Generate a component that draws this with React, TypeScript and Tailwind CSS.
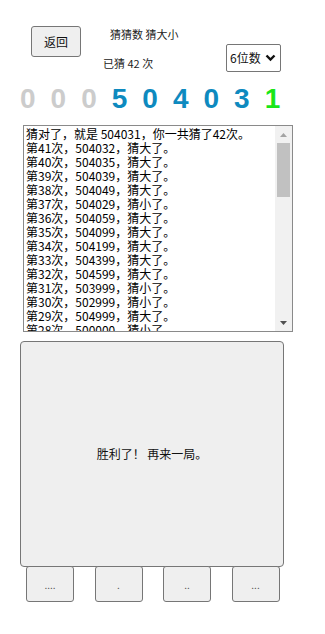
import { useState } from 'react'

const cjk = { fontFamily: '"Microsoft YaHei", "Noto Sans CJK SC", "Noto Sans", sans-serif' }

const digits = [
    { d: '0', c: 'text-[#cccccc]' },
    { d: '0', c: 'text-[#cccccc]' },
    { d: '0', c: 'text-[#cccccc]' },
    { d: '5', c: 'text-[#0e8abf]' },
    { d: '0', c: 'text-[#0e8abf]' },
    { d: '4', c: 'text-[#0e8abf]' },
    { d: '0', c: 'text-[#0e8abf]' },
    { d: '3', c: 'text-[#0e8abf]' },
    { d: '1', c: 'text-[#19e619]' },
]

// 历史记录，从最后一次往前
const history: [number, string, string][] = [
    [41, '504032', '大'], [40, '504035', '大'], [39, '504039', '大'], [38, '504049', '大'],
    [37, '504029', '小'], [36, '504059', '大'], [35, '504099', '大'], [34, '504199', '大'],
    [33, '504399', '大'], [32, '504599', '大'], [31, '503999', '小'], [30, '502999', '小'],
    [29, '504999', '大'], [28, '500000', '小'], [27, '509999', '大'], [26, '519999', '大'],
    [25, '499999', '小'], [24, '529999', '大'], [23, '549999', '大'], [22, '599999', '大'],
    [21, '450000', '小'], [20, '650000', '大'], [19, '400000', '小'], [18, '700000', '大'],
    [17, '350000', '小'], [16, '750000', '大'], [15, '300000', '小'], [14, '800000', '大'],
    [13, '250000', '小'], [12, '850000', '大'], [11, '200000', '小'], [10, '900000', '大'],
    [9, '150000', '小'], [8, '950000', '大'], [7, '100000', '小'], [6, '990000', '大'],
    [5, '050000', '小'], [4, '999000', '大'], [3, '010000', '小'], [2, '999999', '大'],
    [1, '000001', '小'],
]

const logText = ['猜对了，就是 504031，你一共猜了42次。']
    .concat(history.map(([n, v, r]) => `第${n}次，${v}，猜${r}了。`))
    .join('\n')

const btn = 'bg-[#efefef] border border-[#767676] rounded-[3px] text-[#111]'

export default function App() {
    const [len, setLen] = useState('6')

    return (
        <div className="w-[325px] min-h-[634px] bg-white text-[#111]" style={cjk}>
            <div className="h-[83px] pt-[26px] flex items-start">
                <button className={`${btn} ml-[31px] w-[50px] h-[31px] text-[12px] leading-none`}>返回</button>
                <div className="ml-[22px] flex flex-col text-[11px] leading-[16px] text-[#222]">
                    <span className="pl-[7px]">猜猜数 猜大小</span>
                    <span className="mt-[13px]">已猜 42 次</span>
                </div>
                <div className="relative ml-auto mr-[44px] mt-[18px] w-[55px] h-[28px]">
                    <select
                        value={len}
                        onChange={e => setLen(e.target.value)}
                        className="appearance-none w-full h-full bg-white border border-[#767676] rounded-[2px] pl-[3px] text-[12px] text-[#111] outline-none"
                        style={cjk}
                    >
                        <option value="4">4位数</option>
                        <option value="5">5位数</option>
                        <option value="6">6位数</option>
                    </select>
                    <svg className="absolute right-[5px] top-[10px] pointer-events-none" width="11" height="8" viewBox="0 0 11 8">
                        <path d="M1.5 1.5 L5.5 5.5 L9.5 1.5" fill="none" stroke="#111" strokeWidth="2.4" />
                    </svg>
                </div>
            </div>

            <div
                className="flex pl-[20px] gap-[15px] h-[32px] text-[28px] leading-[32px] font-bold"
                style={{ fontFamily: '"Liberation Sans", Arial, sans-serif' }}
            >
                {digits.map((x, i) => (
                    <span key={i} className={x.c}>{x.d}</span>
                ))}
            </div>

            <div className="relative mt-[10px] ml-[23px] w-[270px] h-[207px]">
                <textarea
                    readOnly
                    value={logText}
                    className="block w-full h-full border border-[#8a8a8a] pl-[2px] pr-[19px] py-[1px] text-[12px] leading-[14px] text-black resize-none outline-none overflow-y-scroll [scrollbar-width:none]"
                    style={{ fontFamily: '"Noto Sans CJK SC", "Noto Sans", sans-serif' }}
                />
                {/* 滚动条 */}
                <div className="absolute right-[1px] top-[1px] bottom-[1px] w-[17px] bg-[#f1f1f1] flex flex-col pointer-events-none">
                    <div className="h-[17px] flex items-center justify-center">
                        <svg width="7" height="4" viewBox="0 0 7 4"><path d="M0 4 L3.5 0 L7 4 Z" fill="#a3a3a3" /></svg>
                    </div>
                    <div className="h-[54px] mx-[2px] bg-[#c1c1c1]" />
                    <div className="flex-1" />
                    <div className="h-[17px] flex items-center justify-center">
                        <svg width="7" height="4" viewBox="0 0 7 4"><path d="M0 0 L3.5 4 L7 0 Z" fill="#505050" /></svg>
                    </div>
                </div>
            </div>

            <button className={`${btn} block mt-[9px] ml-[20px] w-[264px] h-[226px] text-[12px] rounded-[4px]`}>
                胜利了！ 再来一局。
            </button>

            <div className="flex ml-[26px] gap-[20.5px] -mt-[1px]">
                {['....', '.', '..', '...'].map((t, i) => (
                    <button key={i} className={`${btn} w-[48px] h-[36px] text-[10px] text-[#555]`}>{t}</button>
                ))}
            </div>
        </div>
    )
}
